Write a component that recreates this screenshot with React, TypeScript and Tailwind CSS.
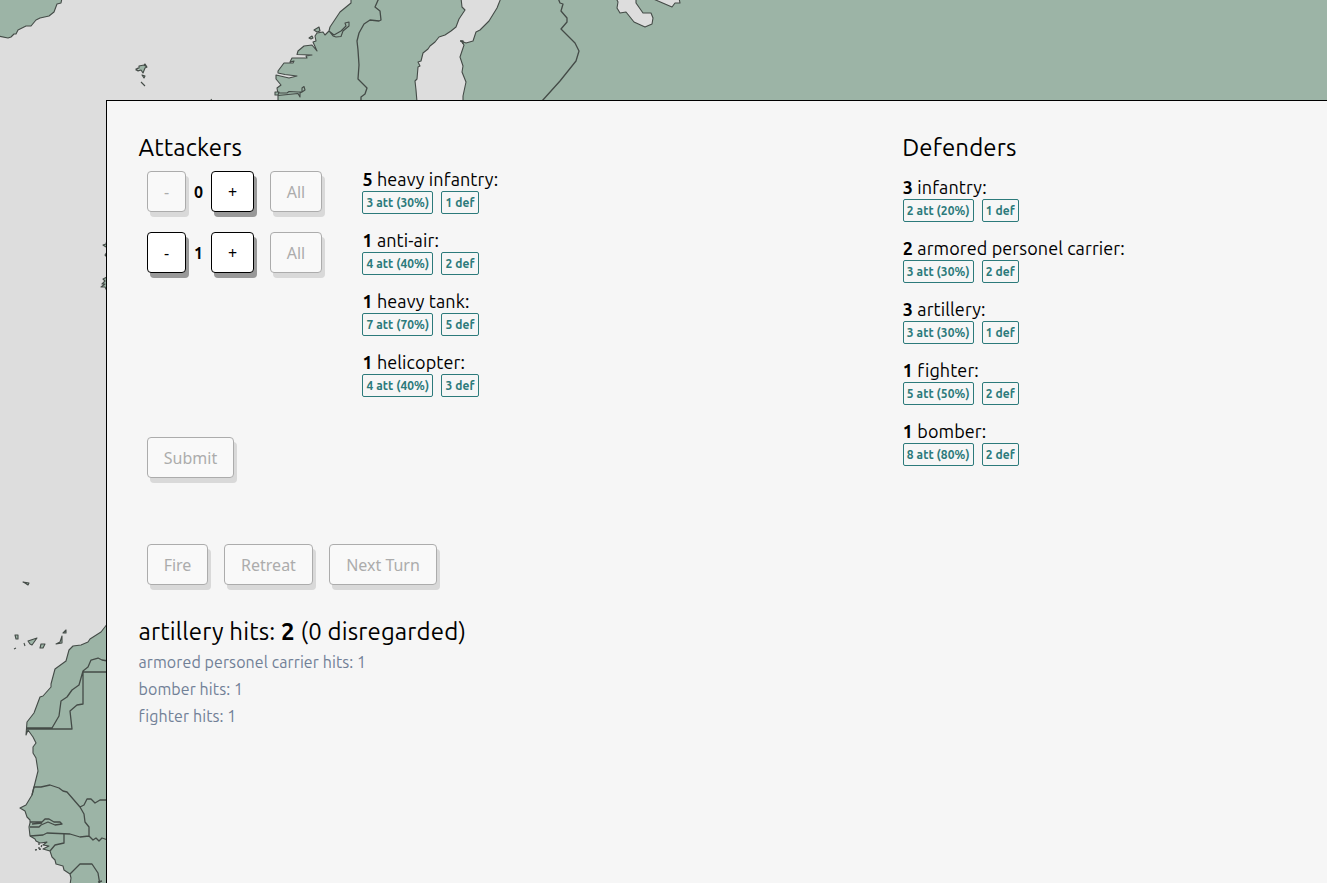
import React from "react";

type Unit = { count: number; name: string; att: string; def: number };

const attackers: Unit[] = [
  { count: 5, name: "heavy infantry", att: "3 att (30%)", def: 1 },
  { count: 1, name: "anti-air", att: "4 att (40%)", def: 2 },
  { count: 1, name: "heavy tank", att: "7 att (70%)", def: 5 },
  { count: 1, name: "helicopter", att: "4 att (40%)", def: 3 },
];

const defenders: Unit[] = [
  { count: 3, name: "infantry", att: "2 att (20%)", def: 1 },
  { count: 2, name: "armored personel carrier", att: "3 att (30%)", def: 2 },
  { count: 3, name: "artillery", att: "3 att (30%)", def: 1 },
  { count: 1, name: "fighter", att: "5 att (50%)", def: 2 },
  { count: 1, name: "bomber", att: "8 att (80%)", def: 2 },
];

function WorldMap() {
  return (
    <svg
      className="absolute inset-0"
      width="1327"
      height="883"
      viewBox="0 0 1327 883"
      fill="#9cb4a6"
      stroke="#444b47"
      strokeWidth="1.1"
      strokeLinejoin="round"
    >
      {/* Greenland */}
      <path d="M-2-2H62L61 3 57 4 54 12 49 16 40 18 36 20 31 26 26 26 18 30 16 34 14 34 11 37 8 38-2 36Z" />
      {/* Faroe Islands */}
      <path d="M139 66l5-1 1-1 2 3-2 1-2 5-2-3-3 1-2-2 3-1zM138 68l-2 2 3 1M142 75l3 1-1 2zM141 82l4 4M144 65l3 2" />
      {/* Norway and Sweden */}
      <path d="M351-2V3L340 12 330 27 329 31 333 36 336 37 341 36.500 343 31 349 26 349 22 345 23 346 26 341 31 334 35 329 31 325 35 323 32 317 33 315 36 316 41 313 42 317 51 312 45 304 46 298 51 297 54.500 312 55 306 56 307 58 292 58 290 62 294 61 293 63 284 63 278 71 278 73 285 74.500 297 76 289 78 276 75 276 79 281 85 277 88 278 94 278 102H417L416 90 415 81 417 79 418 67 420 66 418 62 421 61 423 53 428 49 430 46 435 42 439 37 445 35 451 31 456 27 459 19 465 10 462 7 461-2Z" />
      <path d="M275 92l4 0-1 3-3 0zM278 93L287 93 289 91.500 298 92 302 92 302 88 304 86.500 305 90 302 92 300 93 300 97 298 93.500 278 95.500" />
      <path d="M314 30l5-3 1 4-3 1zM309 38l3-2 1 2-2 1z" />
      {/* Finland and Russia */}
      <path d="M501-2L497 8 489 21 480 30 476 32 473 41 466 43 461 41 464 45 460 57 463 66 462 72 466 82 463 96 463 102H1330V-2Z" />
      <g fill="none" strokeWidth="1.3">
        <path d="M379-2L375 7 380 11 381 20 379 21 370 20 364 24 359 33 357 41 358 50 359 65 358 79 367 88 365 94 361 97 361 102" />
        <path d="M558-2L560 3 563 4 561 11 567 18 567 22 561 29 575 43 579 51 576 61 568 71 560 81 542 101" />
        <path d="M460 41l3 0 0 3" />
      </g>
      {/* White Sea */}
      <path fill="#ddd" d="M616-2L618 2 617 8 620 13 626 12 634 22 645 27 652 24 653 18 651 13 643 13 636 3 636-2ZM651-2L672 7 675 3 680 3 679-2Z" />
      {/* Shetland tip */}
      <path d="M211 99l1 2" />
      {/* Hebrides and the Irish coast */}
      <path d="M107 240l-1 4-3 1 3 2M107 252l-2 3 2 2M107 277l-4 2 2 2-3 3 3 0-4 3 4 0 2 4" />
      {/* Madeira and the Canary Islands */}
      <path d="M23 582l6 1-1 2-3-2zM15 635l3 0 0 4-2 0zM14 649l2-1M24 643l1 3M28 641l9-3-5 7-2-1zM41 644l4 0-2 4-3 0zM63 633l3-3 0 3zM56 644l4-2 2-6 0 7z" />
      {/* West Africa */}
      <path d="M108 623L101 632 90 639 88 642 81 645 73 646 69 650 66 661 55 669 51 684 51 687 43 696 40 697 34 713 27 722 26 735 28 730 33 737 36 743 33 747 33 753 36 758 38 771 32 795 26 805 20 808 25 811 27 817 30 820 30 823 29 827 30 836 35 839 36 841 40 843 47 842 43 845 49 846 43 849 50 851 52 857 55 860 56 864 63 866 64 870 70 874 71 878 70 885H108Z" />
      <g fill="none" strokeWidth="1.3">
        <path d="M27 728L52 728 59 716 61 701 67 697 72 690 79 685 83 671 88 667 91 660 98 658 102 660 108 661M108 672H83V704L77 705 70 711 72 729H27" />
        <path d="M32 795L34 787 41 787 50 785 59 788 63 791 67 792 80 807 84 805 87 799 91 799 95 803 100 800 108 800M80 807L84 814 85 822 89 827 89 836 80 837 70 834 47 833 43 835 30 836M89 836L93 840 96 838 99 841 102 838 108 840" />
        <path d="M30 822L42 822 45 819 49 819 54 822 60 822 62 824 55 825 48 822 41 825 39 827 30 827M32 824L42 823M64 834L64 843 55 845 50 851M70 874L80 864H92L98 873 100 885M98 882l4-1" />
        <path strokeDasharray="2 2" d="M35 850l6-1 1-6M39 843l0 7" />
      </g>
    </svg>
  );
}

function Button({ children, disabled, width }: { children: React.ReactNode; disabled?: boolean; width: string }) {
  return (
    <button
      disabled={disabled}
      className={`${width} h-[41px] shrink-0 rounded-sm border border-black bg-white font-['Noto_Sans',sans-serif] text-base leading-6 text-black shadow-[3px_5px_0_#999] disabled:border-[#acacac] disabled:bg-[#f9f9f9] disabled:text-[#acacac] disabled:shadow-[3px_5px_0_#d9d9d9]`}
    >
      {children}
    </button>
  );
}

function Selector({ value }: { value: number }) {
  return (
    <div className="flex h-[61px] items-start pt-2 pl-2">
      <Button disabled={value === 0} width="w-[39px]">-</Button>
      <b className="w-[25px] text-center text-base leading-[42px]">{value}</b>
      <Button width="w-[43px]">+</Button>
      <span className="w-4" />
      <Button disabled width="w-[52px]">All</Button>
    </div>
  );
}

function UnitRow({ unit }: { unit: Unit }) {
  return (
    <li className="h-[61px]">
      <div className="h-6 whitespace-nowrap text-lg leading-[33px] tracking-[0.1px]">
        <b>{unit.count}</b> {unit.name}:
      </div>
      <div className="mt-1 flex gap-2 text-xs font-bold text-[#2c7a7b]">
        <span className="flex h-[23px] w-[71px] items-center whitespace-nowrap rounded-xs border border-[#2c7a7b] pl-[3px] tracking-[0.08px]">
          {unit.att}
        </span>
        <span className="flex h-[23px] w-[37.2px] items-center whitespace-nowrap rounded-xs border border-[#2c7a7b] pl-[3px] tracking-[0.08px]">
          {unit.def} def
        </span>
      </div>
    </li>
  );
}

export default function App() {
  return (
    <div className="relative h-[883px] w-full overflow-hidden bg-[#ddd] pt-[100px] pl-[106px] font-['Ubuntu','Noto_Sans',sans-serif] text-black">
      <WorldMap />
      <main className="relative h-[783px] border-t border-l border-black bg-[#f6f6f6] pt-8 pl-8">
        <div className="flex">
          <section className="w-[763.8px]">
            <h2 className="-ml-[0.5px] h-[30px] text-2xl leading-[30px] tracking-[0.12px]">Attackers</h2>
            <div className="flex h-[266px]">
              <div className="w-[223.4px]">
                <Selector value={0} />
                <Selector value={1} />
              </div>
              <ul>
                {attackers.map((u) => <UnitRow key={u.name} unit={u} />)}
              </ul>
            </div>
            <div className="pt-2 pl-2">
              <Button disabled width="w-[87px]">Submit</Button>
            </div>
          </section>
          <section>
            <h2 className="-ml-[0.5px] h-[38px] text-2xl leading-[30px] tracking-[0.12px]">Defenders</h2>
            <ul>
              {defenders.map((u) => <UnitRow key={u.name} unit={u} />)}
            </ul>
          </section>
        </div>
        <div className="mt-[66px] flex gap-4 pl-2">
          <Button disabled width="w-[61px]">Fire</Button>
          <Button disabled width="w-[89px]">Retreat</Button>
          <Button disabled width="w-[108px]">Next Turn</Button>
        </div>
        <div className="-ml-[0.5px] mt-[31px] text-2xl leading-8 tracking-[0.16px]">
          artillery hits: <b>2</b> (0 disregarded)
        </div>
        <div className="-ml-[0.5px] mt-px text-base leading-[27px] tracking-[0.09px] text-[#718096]">
          <p>armored personel carrier hits: 1</p>
          <p>bomber hits: 1</p>
          <p>fighter hits: 1</p>
        </div>
      </main>
    </div>
  );
}
